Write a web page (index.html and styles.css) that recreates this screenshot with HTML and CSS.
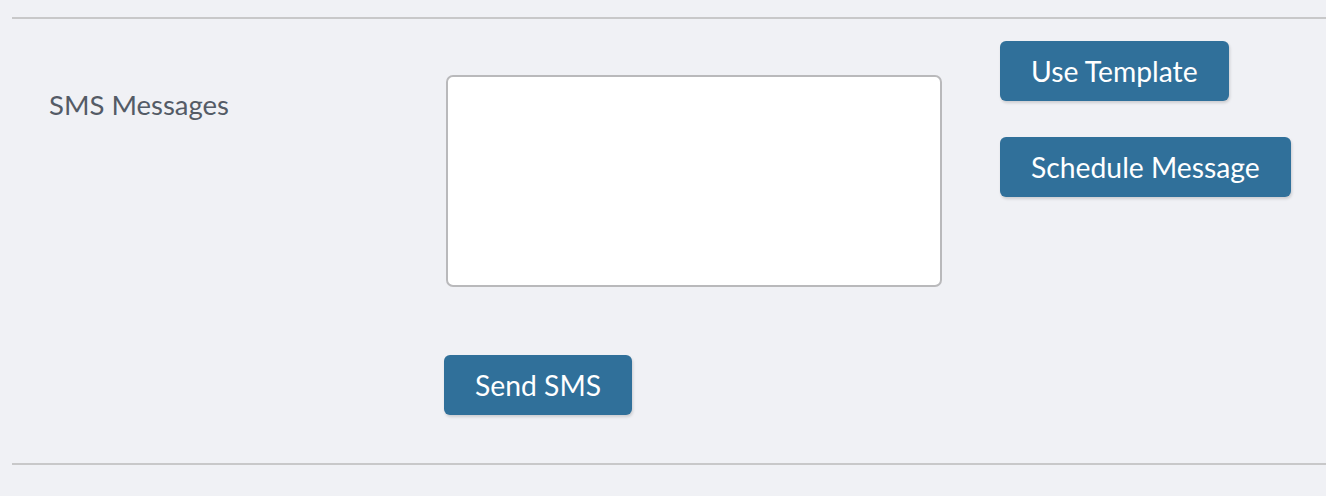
FILE: index.html
```html
<!DOCTYPE html>
<html>
<head>
<meta charset="utf-8">
<link rel="stylesheet" href="styles.css">
</head>
<body>
<section class="panel">
  <div class="row">
    <div class="label">SMS Messages</div>
    <div class="field">
      <textarea class="message"></textarea>
    </div>
    <div class="actions">
      <button class="btn">Use Template</button>
      <button class="btn">Schedule Message</button>
    </div>
  </div>
  <div class="send-row">
    <button class="btn">Send SMS</button>
  </div>
</section>
</body>
</html>
```
FILE: styles.css
```css
html, body {
  margin: 0;
  padding: 0;
  background: #f0f1f5;
}
body {
  font-family: Lato, "Open Sans", sans-serif;
  padding-top: 17px;
}
.panel {
  margin-left: 12px;
  border-top: 2px solid #c8c8c9;
  border-bottom: 2px solid #c8c8c9;
  height: 448px;
  box-sizing: border-box;
}
.row {
  display: flex;
  align-items: flex-start;
}
.label {
  width: 397px;
  padding-left: 37px;
  padding-top: 69px;
  font-size: 27.5px;
  color: #545b66;
  box-sizing: border-box;
}
.field {
  padding-top: 56px;
}
.message {
  display: block;
  width: 496px;
  height: 212px;
  box-sizing: border-box;
  border: 2px solid #b9b9bb;
  border-radius: 7px;
  background: #fff;
  resize: none;
  margin: 0;
  margin-left: 37px;
}
.actions {
  display: flex;
  flex-direction: column;
  align-items: flex-start;
  gap: 36px;
  padding-top: 22px;
  margin-left: 58px;
}
.btn {
  background: #30709a;
  color: #fff;
  border: none;
  border-radius: 6px;
  height: 60px;
  padding: 0 31px;
  font-family: Lato, "Open Sans", sans-serif;
  font-size: 28.3px;
  box-shadow: 1px 2px 3px rgba(0,0,0,0.15);
  cursor: pointer;
}
.send-row {
  padding-left: 432px;
  padding-top: 68px;
}
```
